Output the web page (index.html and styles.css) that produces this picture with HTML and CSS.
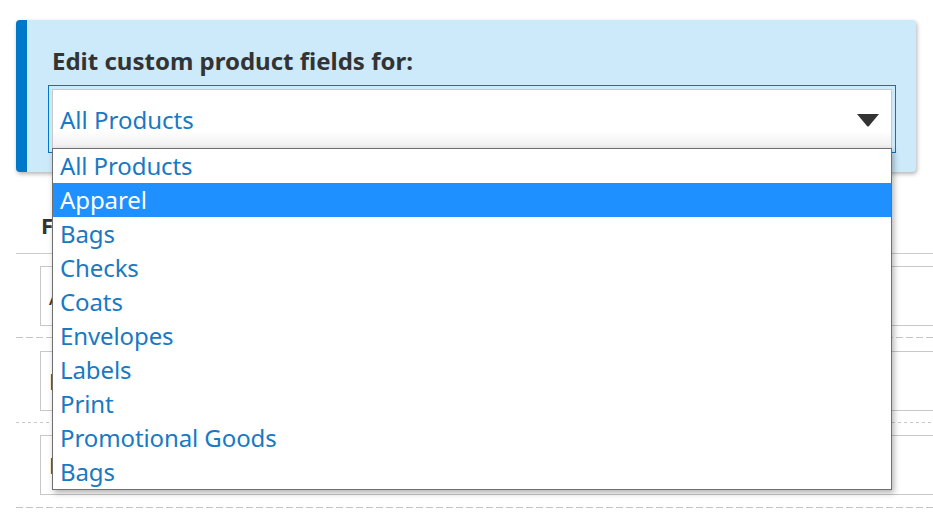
FILE: index.html
```html
<!DOCTYPE html>
<html lang="en">
<head>
<meta charset="utf-8">
<title>Edit custom product fields</title>
<link rel="stylesheet" href="styles.css">
</head>
<body>
<div class="page">
  <div class="panel">
    <h2 class="panel-title">Edit custom product fields for:</h2>
    <div class="select-wrap">
      <div class="select">
        <span class="select-value">All Products</span>
        <svg class="select-arrow" width="24" height="14" viewBox="0 0 24 14"><path d="M1 1 H23 L12.8 13.2 Q12 14 11.2 13.2 Z" fill="#333"/></svg>
      </div>
      <ul class="options">
        <li class="option">All Products</li>
        <li class="option is-active">Apparel</li>
        <li class="option">Bags</li>
        <li class="option">Checks</li>
        <li class="option">Coats</li>
        <li class="option">Envelopes</li>
        <li class="option">Labels</li>
        <li class="option">Print</li>
        <li class="option">Promotional Goods</li>
        <li class="option">Bags</li>
      </ul>
    </div>
  </div>

  <section class="fields">
    <h3 class="fields-title">Fields</h3>
    <div class="field-row row-1 sep-dashed"><div class="field-box">Attribute</div></div>
    <div class="field-row row-2 sep-dotted"><div class="field-box">Brand</div></div>
    <div class="field-row row-3 sep-dashed"><div class="field-box">Design</div></div>
  </section>
</div>
</body>
</html>
```

FILE: styles.css
```css
html, body {
  margin: 0;
  padding: 0;
  background: #fff;
  overflow: hidden;
}
body {
  font-family: "Noto Sans", "Open Sans", sans-serif;
  color: #333;
}
.page {
  padding-top: 20px;
  width: 1000px;
}
.panel {
  position: relative;
  z-index: 2;
  margin-left: 16px;
  width: 840px;
  border-left: 11px solid #0077c8;
  border-radius: 4px;
  background: #cdeafb;
  box-shadow: 1px 2px 4px rgba(0,0,0,0.3);
  padding: 25px 24px 23px 25px;
}
.panel-title {
  margin: 0 0 12px 0;
  font-size: 24px;
  line-height: 32px;
  font-weight: 700;
  color: #333;
}
.select-wrap {
  position: relative;
  width: 840px;
}
.select {
  box-sizing: border-box;
  height: 60px;
  border: 1px solid #c8c8c8;
  outline: 1px solid #0077c8;
  outline-offset: 3px;
  background: linear-gradient(to bottom, #fff 0, #fff 70%, #efefef 100%);
  display: flex;
  align-items: center;
  justify-content: space-between;
  padding: 0 11px 0 7px;
}
.select-value {
  font-size: 24px;
  color: #1979c3;
  line-height: 34px;
  margin-top: 2px;
}
.select-arrow {
  display: block;
  margin-top: 2px;
}
.options {
  position: absolute;
  top: 59px;
  left: 0;
  width: 840px;
  box-sizing: border-box;
  margin: 0;
  padding: 0;
  list-style: none;
  background: #fff;
  border: 1px solid #707070;
  box-shadow: 2px 3px 6px rgba(0,0,0,0.3);
}
.option {
  height: 34px;
  line-height: 34px;
  padding-left: 7px;
  font-size: 24px;
  letter-spacing: -0.1px;
  color: #1979c3;
  white-space: nowrap;
}
.option.is-active {
  background: #1e90ff;
  color: #fff;
}
.fields {
  margin-left: 16px;
  width: 960px;
}
.fields-title {
  margin: 0;
  padding: 38px 0 13px 25px;
  font-size: 22px;
  line-height: 30px;
  font-weight: 700;
  color: #333;
  border-bottom: 1px solid #ccc;
}
.field-row {
  padding: 12px 0 12px 24px;
  background-repeat: repeat-x;
  background-position: left bottom;
  background-size: 10px 1px;
}
.row-2 { padding-top: 13px; }
.row-3 { padding-bottom: 13px; }
.sep-dashed {
  background-image: linear-gradient(to right, #c4c4c4 0, #c4c4c4 7px, transparent 7px, transparent 10px);
  padding-bottom: 13px;
}
.row-1.sep-dashed { padding-bottom: 12px; }
.sep-dotted {
  background-image: linear-gradient(to right, #c8c8c8 0, #c8c8c8 3px, transparent 3px, transparent 6px);
  background-size: 6px 1px;
}
.field-box {
  box-sizing: border-box;
  height: 60px;
  border: 1px solid #c8c8c8;
  padding: 0 8px;
  display: flex;
  align-items: center;
  font-size: 22px;
  color: #333;
}
```
